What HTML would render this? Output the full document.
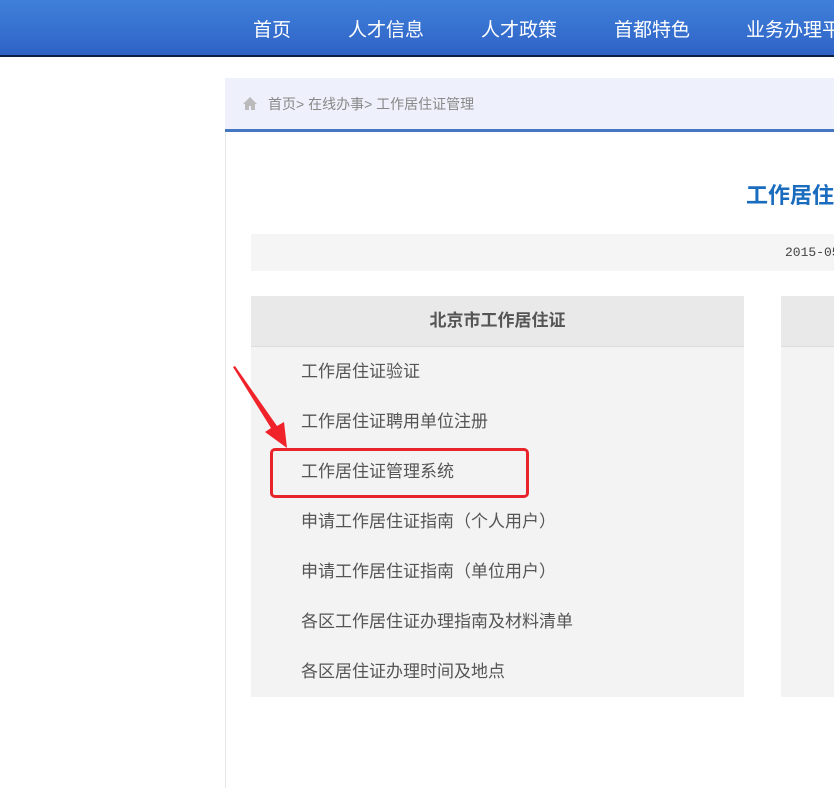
<!DOCTYPE html>
<html><head><meta charset="utf-8"><style>
*{margin:0;padding:0;box-sizing:border-box}
body{width:834px;height:788px;overflow:hidden;background:#fff;font-family:"Liberation Sans","Noto Sans CJK SC",sans-serif;position:relative}
.nav{position:absolute;left:0;top:0;width:834px;height:57px;background:linear-gradient(#3f80da,#2f63c6);border-bottom:2px solid #0d1f45;overflow:hidden}
.nav span{position:absolute;top:15px;color:#fff;font-size:19px;white-space:nowrap}
.panel{position:absolute;left:225px;top:78px;width:609px;height:710px;border-left:1px solid #e6e6e6}
.bc{position:absolute;left:225px;top:78px;width:609px;height:54px;background:#eef1fb;border-bottom:3px solid #4577c0;font-size:14px;color:#888;padding:16px 0 0 43px;white-space:nowrap;overflow:hidden}
.title{position:absolute;left:746px;top:178px;width:88px;overflow:hidden;color:#1a6cbf;font-size:22px;font-weight:bold;white-space:nowrap}
.date{position:absolute;left:251px;top:234px;width:583px;height:37px;background:#f5f5f5;font-family:"Liberation Mono",monospace;font-size:13px;color:#444;padding:11px 0 0 534px;white-space:nowrap;overflow:hidden}
.box{position:absolute;left:251px;top:296px;width:493px;height:401px;background:#f3f3f3}
.box h3{height:51px;background:#e9e9e9;border-bottom:1px solid #ddd;text-align:center;font-size:17px;color:#555;line-height:50px}
.box div{height:50px;line-height:50px;padding-left:50px;font-size:17px;color:#555}
.rbox{position:absolute;left:781px;top:296px;width:53px;height:401px;background:#f3f3f3}
.rbox i{display:block;height:51px;background:#e9e9e9;border-bottom:1px solid #ddd}
.red{position:absolute;left:270px;top:448px;width:259px;height:50px;border:3px solid #e8232a;border-radius:5px}
</style></head><body>
<div class="nav"><span style="left:253px">首页</span><span style="left:348px">人才信息</span><span style="left:481px">人才政策</span><span style="left:614px">首都特色</span><span style="left:746px">业务办理平台</span></div>
<div class="panel"></div>
<div class="bc"><svg style="position:absolute;left:18px;top:18px" width="14" height="14" viewBox="0 0 14 14"><path d="M7 1L0 8h2v6h4v-4h2v4h4V8h2z" fill="#bbb"/></svg>首页&gt; 在线办事&gt; 工作居住证管理</div>
<div class="title">工作居住证管理</div>
<div class="date">2015-05-20</div>
<div class="box"><h3>北京市工作居住证</h3>
<div>工作居住证验证</div><div>工作居住证聘用单位注册</div><div>工作居住证管理系统</div><div>申请工作居住证指南（个人用户）</div><div>申请工作居住证指南（单位用户）</div><div>各区工作居住证办理指南及材料清单</div><div>各区居住证办理时间及地点</div></div>
<div class="rbox"><i></i></div>
<div class="red"></div>
<svg style="position:absolute;left:0;top:0" width="834" height="788"><path d="M233 367L271 428L265 432L287 448L284 422L277 426L235 366Z" fill="#f0232a"/></svg>
</body></html>
